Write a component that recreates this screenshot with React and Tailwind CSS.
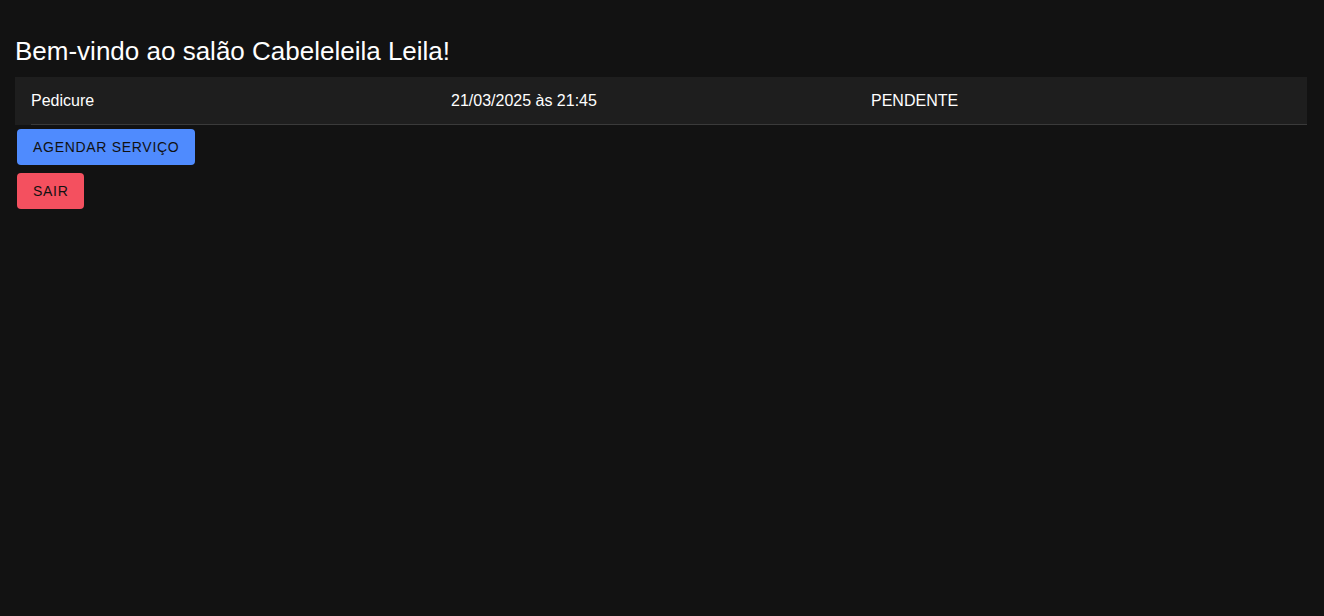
import React from "react";

const agendamentos = [
  { id: 1, servico: "Pedicure", data: "21/03/2025 às 21:45", status: "PENDENTE" },
];

export default function App() {
  return (
    <div className="min-h-screen bg-[#121212] text-white font-['Liberation_Sans',Arial,sans-serif] pl-[15px] pr-[17px] pt-[35px]">
      <h1 className="text-[26px] leading-[32px] mb-[10px]">Bem-vindo ao salão Cabeleleila Leila!</h1>

      {/* Lista de agendamentos */}
      <ul className="bg-[#1e1e1e]">
        {agendamentos.map((a) => (
          <li key={a.id} className="pl-[16px]">
            <div className="grid grid-cols-[420px_420px_1fr] h-[48px] items-center text-[16px] border-b border-[#3a3a3a]">
              <span>{a.servico}</span>
              <span>{a.data}</span>
              <span>{a.status}</span>
            </div>
          </li>
        ))}
      </ul>

      <div className="flex flex-col items-start gap-[8px] mt-[4px] pl-[2px]">
        <button className="h-[36px] px-[16px] rounded-[4px] bg-[#4f8bfe] text-[#111] text-[14px] tracking-[0.05em] uppercase">
          Agendar Serviço
        </button>
        <button className="h-[36px] px-[16px] rounded-[4px] bg-[#f4505f] text-[#111] text-[14px] tracking-[0.05em] uppercase">
          Sair
        </button>
      </div>
    </div>
  );
}
